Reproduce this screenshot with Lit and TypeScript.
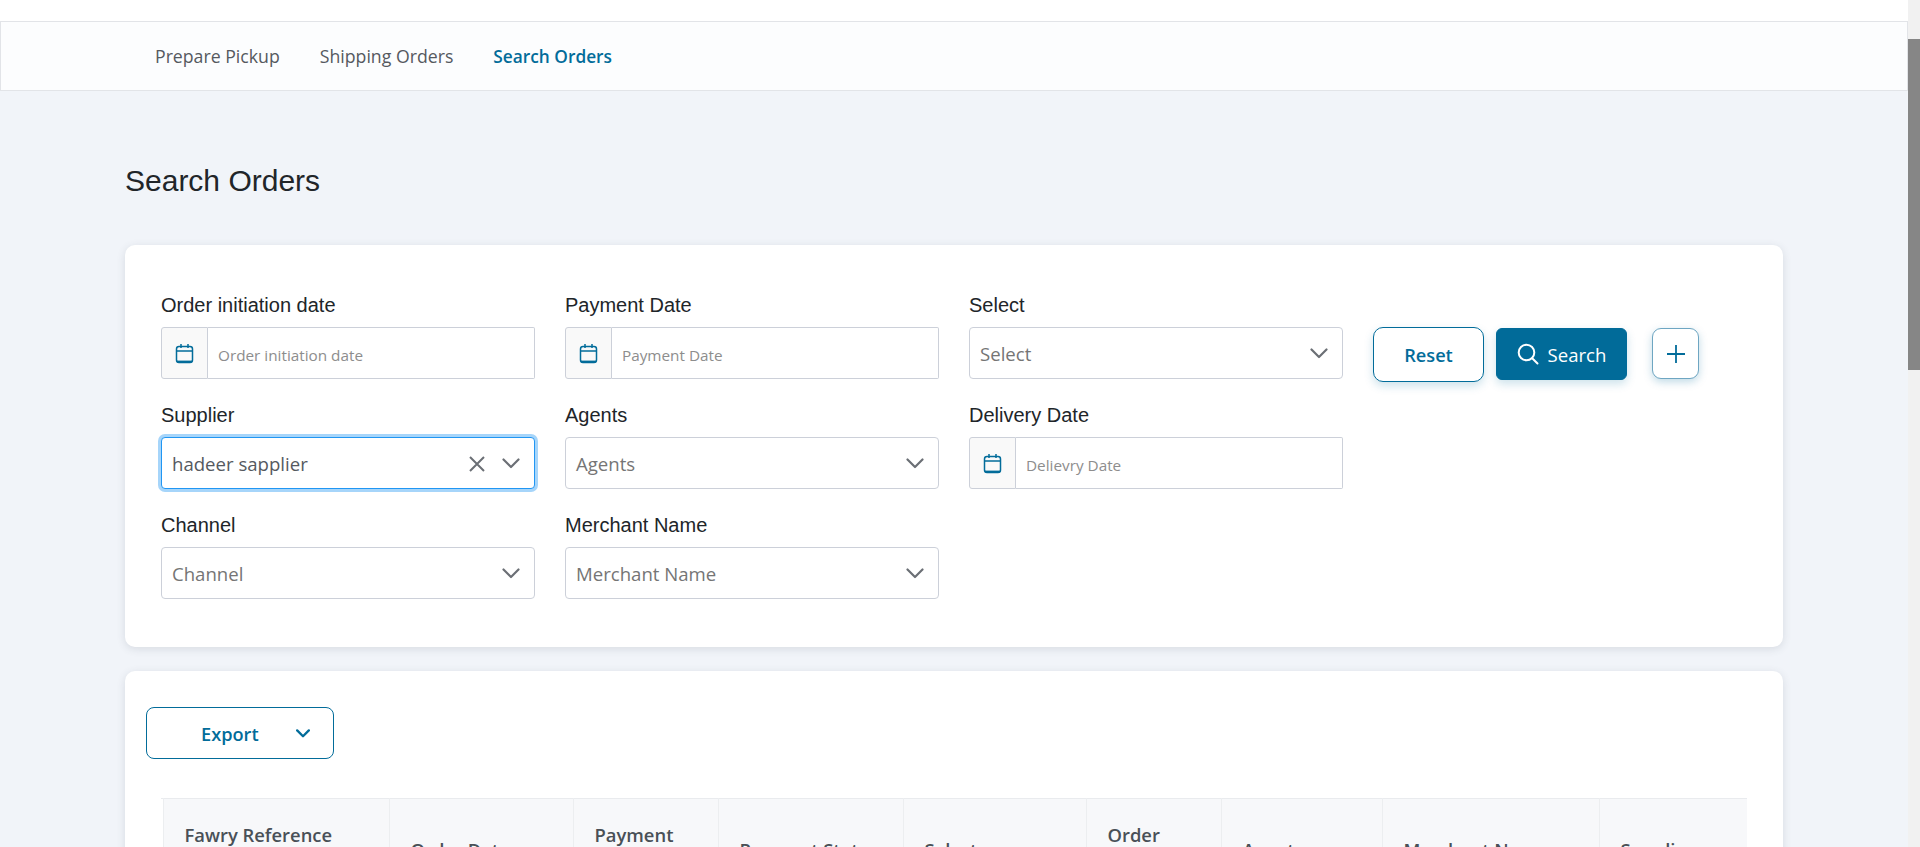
import { LitElement, html, css, svg } from 'lit';
import { customElement } from 'lit/decorators.js';

type Field =
  | { kind: 'date'; label: string; placeholder: string }
  | { kind: 'select'; label: string; placeholder: string; value?: string };

const NAV = ['Prepare Pickup', 'Shipping Orders', 'Search Orders'];

const FIELDS: Field[][] = [
  [
    { kind: 'date', label: 'Order initiation date', placeholder: 'Order initiation date' },
    { kind: 'date', label: 'Payment Date', placeholder: 'Payment Date' },
    { kind: 'select', label: 'Select', placeholder: 'Select' },
  ],
  [
    { kind: 'select', label: 'Supplier', placeholder: 'Supplier', value: 'hadeer sapplier' },
    { kind: 'select', label: 'Agents', placeholder: 'Agents' },
    { kind: 'date', label: 'Delivery Date', placeholder: 'Delievry Date' },
  ],
  [
    { kind: 'select', label: 'Channel', placeholder: 'Channel' },
    { kind: 'select', label: 'Merchant Name', placeholder: 'Merchant Name' },
  ],
];

const COLUMNS = [
  { title: '', width: 2 },
  { title: 'Fawry Reference Number', width: 226 },
  { title: 'Order Date', width: 184 },
  { title: 'Payment Date', width: 145 },
  { title: 'Payment Status', width: 185 },
  { title: 'Select', width: 183 },
  { title: 'Order Status', width: 135 },
  { title: 'Agents', width: 161 },
  { title: 'Merchant Name', width: 217 },
  { title: 'Supplier', width: 148 },
];

const chevron = svg`<path d="M1.5 1.5 9 9l7.5-7.5" fill="none" stroke="currentColor" stroke-width="2.2" stroke-linecap="round" stroke-linejoin="round"/>`;

@customElement('app-root')
export class AppRoot extends LitElement {
  static override styles = css`
    :host {
      display: flex;
      height: 847px;
      overflow: hidden;
      background: #f1f4f9;
      font-family: 'Open Sans', 'Noto Sans', sans-serif;
      color: #212529;
    }

    * {
      box-sizing: border-box;
    }

    .page {
      flex: 1;
      min-width: 0;
    }

    .topbar {
      height: 21px;
      background: #fff;
    }

    .nav {
      display: flex;
      align-items: center;
      gap: 40px;
      height: 70px;
      padding-left: 154px;
      background: #fcfdfe;
      border: 1px solid #e2e4e8;
      font-size: 17.7px;
      color: #55595f;
    }

    .nav .active {
      color: #026c9a;
      font-size: 17.3px;
      font-weight: 600;
    }

    .content {
      padding: 0 125px;
    }

    h1 {
      margin: 72px 0 46px;
      font: 400 30px/36px 'Liberation Sans', Arial, sans-serif;
      color: #212529;
    }

    .card {
      background: #fff;
      border-radius: 10px;
      box-shadow: 0 2px 8px rgba(60, 72, 88, 0.14);
    }

    .filters {
      display: grid;
      grid-template-columns: repeat(3, 374px) auto;
      gap: 22px 30px;
      padding: 46px 36px 48px;
      margin-bottom: 24px;
    }

    label {
      display: block;
      height: 27px;
      margin-bottom: 9px;
      padding-top: 1px;
      font: 400 20px/27px 'Liberation Sans', Arial, sans-serif;
      color: #212529;
    }

    .row-start {
      grid-column: 1;
    }

    .control {
      display: flex;
      align-items: center;
      height: 52px;
      background: #fff;
      border: 1px solid #ccd0d9;
      border-radius: 4px;
      padding: 1px 14px 0 10px;
      font-size: 18.6px;
      color: #757575;
    }

    .control .text {
      flex: 1;
    }

    .control.focused {
      border-color: #2196f3;
      box-shadow: 0 0 0 3px #a6d5fa;
      color: #55595f;
    }

    .control .clear {
      width: 18px;
      height: 18px;
      margin-right: 16px;
      color: #6b6f75;
    }

    .control .chevron {
      width: 18px;
      height: 11px;
      color: #6b6f75;
    }

    .date {
      display: flex;
      height: 52px;
    }

    .date .addon {
      display: flex;
      align-items: center;
      justify-content: center;
      width: 47px;
      background: #f9f9f9;
      border: 1px solid #ccd0d9;
      border-radius: 3px 0 0 3px;
      color: #026c9a;
    }

    .date .addon svg {
      width: 19px;
      height: 21px;
    }

    .date .input {
      flex: 1;
      display: flex;
      align-items: center;
      padding: 3px 0 0 10px;
      border: 1px solid #ccd0d9;
      border-left: 0;
      border-radius: 0 2px 2px 0;
      font-size: 15.3px;
      color: #8d8d8d;
    }

    .actions {
      display: flex;
      align-items: flex-start;
      height: 52px;
      margin-top: 36px;
      grid-row: 1;
      grid-column: 4;
    }

    button {
      display: flex;
      align-items: center;
      justify-content: center;
      padding: 0;
      font-family: inherit;
      font-size: 18.2px;
      font-weight: 600;
      color: #026c9a;
      background: #fff;
      border: 1px solid #026c9a;
    }

    .reset {
      flex: none;
      width: 111px;
      height: 55px;
      margin-right: 12px;
      border-radius: 10px;
      box-shadow: 0 4px 10px rgba(2, 108, 154, 0.2);
    }

    .search {
      flex: none;
      gap: 9px;
      width: 131px;
      height: 52px;
      margin: 1px 25px 0 0;
      background: #016b99;
      border-color: #016b99;
      border-radius: 6px;
      color: #fff;
      font-size: 18.6px;
      font-weight: 400;
      box-shadow: 0 4px 10px rgba(2, 108, 154, 0.2);
    }

    .search svg {
      width: 22px;
      height: 22px;
    }

    .add {
      flex: none;
      width: 47px;
      height: 51px;
      margin-top: 1px;
      border-color: #6ea6c2;
      border-radius: 9px;
      box-shadow: 0 3px 8px rgba(2, 108, 154, 0.25);
    }

    .add svg {
      width: 20px;
      height: 20px;
    }

    .results {
      padding: 36px;
      height: 400px;
    }

    .export {
      justify-content: flex-start;
      width: 188px;
      height: 52px;
      margin: 0 0 39px -15px;
      padding: 1px 0 0 54px;
      border-radius: 8px;
    }

    .export svg {
      width: 14px;
      height: 9px;
      margin-left: 37px;
    }

    .export path {
      stroke-width: 3;
    }

    table {
      table-layout: fixed;
      width: 1586px;
      border-collapse: collapse;
      border-top: 1px solid #e9ebee;
    }

    th {
      padding: 21px;
      background: #f7f8fa;
      border-right: 1px solid #eceef0;
      font-size: 18.4px;
      font-weight: 600;
      line-height: 30px;
      text-align: left;
      color: #495057;
    }

    th:first-child {
      padding: 0;
      background: #fff;
    }

    th:last-child {
      border-right: 0;
    }

    .scrollbar {
      width: 12px;
      padding-top: 39px;
      background: #f1f1f1;
    }

    .scrollbar div {
      height: 331px;
      background: #868686;
    }
  `;

  private calendar() {
    return html`<svg viewBox="0 0 19 21" fill="none" stroke="currentColor" stroke-width="1.5">
      <rect x="1.5" y="3.5" width="16" height="16" rx="2.5" />
      <path d="M1.5 8h16M6 1v4M13 1v4" />
      <path d="M2 18.6h15" stroke-width="2" />
    </svg>`;
  }

  private renderField(field: Field, rowStart: boolean) {
    if (field.kind === 'date') {
      return html`<div class=${rowStart ? 'row-start' : ''}>
        <label>${field.label}</label>
        <div class="date">
          <span class="addon">${this.calendar()}</span>
          <span class="input">${field.placeholder}</span>
        </div>
      </div>`;
    }
    return html`<div class=${rowStart ? 'row-start' : ''}>
      <label>${field.label}</label>
      <div class="control ${field.value ? 'focused' : ''}">
        <span class="text">${field.value ?? field.placeholder}</span>
        ${field.value
          ? html`<svg class="clear" viewBox="0 0 18 18">
              <path d="M2 2l14 14M16 2 2 16" fill="none" stroke="currentColor" stroke-width="2" />
            </svg>`
          : ''}
        <svg class="chevron" viewBox="0 0 18 11">${chevron}</svg>
      </div>
    </div>`;
  }

  override render() {
    return html`
      <div class="page">
        <div class="topbar"></div>
        <nav class="nav">
          ${NAV.map((item, i) => html`<span class=${i === 2 ? 'active' : ''}>${item}</span>`)}
        </nav>
        <div class="content">
          <h1>Search Orders</h1>
          <section class="card filters">
            ${FIELDS.map((row) => row.map((field, i) => this.renderField(field, i === 0)))}
            <div class="actions">
              <button class="reset">Reset</button>
              <button class="search">
                <svg viewBox="0 0 22 22" fill="none" stroke="currentColor" stroke-width="2">
                  <circle cx="9.5" cy="9.5" r="7.8" />
                  <path d="M15.2 15.2 20.5 20.5" stroke-linecap="round" />
                </svg>
                Search
              </button>
              <button class="add">
                <svg viewBox="0 0 20 20">
                  <path d="M10 1v18M1 10h18" fill="none" stroke="currentColor" stroke-width="1.8" />
                </svg>
              </button>
            </div>
          </section>
          <section class="card results">
            <button class="export">
              Export
              <svg viewBox="0 0 18 11">${chevron}</svg>
            </button>
            <table>
              <colgroup>
                ${COLUMNS.map((col) => html`<col style="width:${col.width}px" />`)}
              </colgroup>
              <thead>
                <tr>
                  ${COLUMNS.map((col) => html`<th>${col.title}</th>`)}
                </tr>
              </thead>
            </table>
          </section>
        </div>
      </div>
      <div class="scrollbar"><div></div></div>
    `;
  }
}

declare global {
  interface HTMLElementTagNameMap {
    'app-root': AppRoot;
  }
}
